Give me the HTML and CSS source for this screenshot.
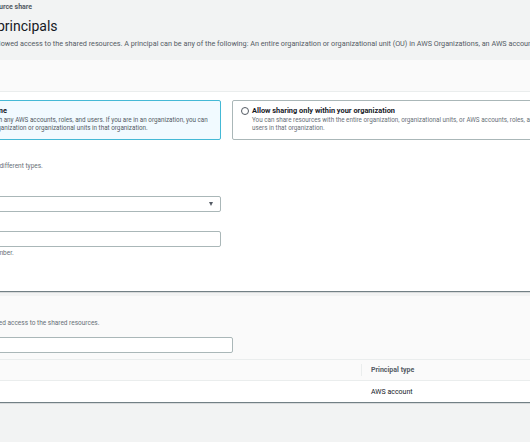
FILE: index.html
```html
<!DOCTYPE html>
<html lang="en">
<head>
<meta charset="utf-8">
<title>Grant access to principals</title>
<link rel="stylesheet" href="styles.css">
</head>
<body>
<div class="page">
  <header class="page-head">
    <div class="crumb">Resource shares<span class="sep">&rsaquo;</span>Create resource share</div>
    <h1 class="title">Grant access to principals</h1>
    <p class="lead">Specify the principals that are allowed access to the shared resources. A principal can be any of the following: An entire organization or organizational unit (OU) in AWS Organizations, an AWS account, an IAM role, or an IAM user.</p>
  </header>

  <section class="panel">
    <div class="panel-head"><h2 class="panel-title">Principals</h2></div>
    <div class="panel-body">
      <div class="tiles">
        <label class="tile tile-on">
          <span class="radio radio-on"></span>
          <span class="tile-text">
            <span class="tile-title">Allow sharing with anyone</span>
            <span class="tile-desc">You can share resources with any AWS accounts, roles, and users. If you are in an organization, you can also share with the entire organization or organizational units in that organization.</span>
          </span>
        </label>
        <label class="tile">
          <span class="radio"></span>
          <span class="tile-text">
            <span class="tile-title">Allow sharing only within your organization</span>
            <span class="tile-desc tile-desc-light">You can share resources with the entire organization, organizational units, or AWS accounts, roles, and users in that organization.</span>
          </span>
        </label>
      </div>

      <div class="field field-first">
        <div class="label">Principals</div>
        <div class="hint">You can add multiple principals of different types.</div>
      </div>

      <div class="field field-select">
        <div class="select">
          <span class="select-value">AWS account</span>
          <span class="caret"></span>
        </div>
      </div>

      <div class="field field-input">
        <div class="input"><span class="placeholder">Enter an AWS account ID</span></div>
        <div class="hint">Account IDs must be a 12-digit number.</div>
      </div>
    </div>
  </section>

  <section class="panel panel-second">
    <div class="panel-head panel-head-tall">
      <h2 class="panel-title">Selected principals (1)</h2>
      <div class="hint hint-head">These are principals that are allowed access to the shared resources.</div>
      <div class="input search"><span class="placeholder">Find principals</span></div>
    </div>
    <div class="table">
      <div class="row row-head">
        <div class="cell">Principal ID</div>
        <div class="cell cell-type"><span class="divider"></span>Principal type</div>
      </div>
      <div class="row">
        <div class="cell">111122223333</div>
        <div class="cell cell-type">AWS account</div>
      </div>
    </div>
  </section>
</div>
</body>
</html>
```

FILE: styles.css
```css
html, body {
  margin: 0;
  padding: 0;
  background: #f2f3f3;
  overflow: hidden;
}

body {
  width: 530px;
  height: 442px;
  font-family: Roboto, "Liberation Sans", Arial, sans-serif;
  color: #16191f;
}

.page {
  margin-left: -110px;
  width: 677px;
}

.page-head {
  padding: 2px 0 0 6px;
  height: 60px;
  box-sizing: border-box;
}

.crumb {
  font-size: 7px;
  line-height: 10px;
  font-weight: 700;
  color: #545b64;
  white-space: nowrap;
}

.sep {
  margin: 0 6px;
}

.title {
  margin: 4px 0 0;
  font-size: 14px;
  line-height: 20px;
  font-weight: 400;
  color: #16191f;
  white-space: nowrap;
}

.lead {
  margin: 3px 0 0;
  font-size: 7.25px;
  line-height: 10px;
  color: #545b64;
  white-space: nowrap;
}

.panel {
  background: #ffffff;
  box-shadow: 0 1px 1px 0 rgba(0, 28, 36, 0.35), 1px 1px 1px 0 rgba(0, 28, 36, 0.15), -1px 1px 1px 0 rgba(0, 28, 36, 0.15);
}

.panel-head {
  background: #fafafa;
  height: 32px;
  border-bottom: 1px solid #eaeded;
  padding: 0 10px;
  box-sizing: border-box;
  display: flex;
  flex-direction: column;
  justify-content: center;
}

.panel-title {
  margin: 0;
  font-size: 9px;
  line-height: 12px;
  font-weight: 700;
  color: #16191f;
  white-space: nowrap;
}

.panel-body {
  padding: 8px 10px 0;
  height: 199px;
  box-sizing: border-box;
}

.tiles {
  display: grid;
  grid-template-columns: 321px 321px;
  column-gap: 11px;
}

.tile {
  display: flex;
  align-items: flex-start;
  gap: 3px;
  height: 40px;
  box-sizing: border-box;
  padding: 5px 3px 6px 8px;
  border: 1px solid #aab7b8;
  border-radius: 2px;
  background: #ffffff;
}

.tile-on {
  background: #f1faff;
  border-color: #44b9d6;
}

.radio {
  flex: none;
  width: 8px;
  height: 8px;
  margin-top: 1px;
  box-sizing: border-box;
  border: 1px solid #545b64;
  border-radius: 50%;
  background: #ffffff;
}

.radio-on {
  border: 2.5px solid #0073bb;
}

.tile-text {
  display: flex;
  flex-direction: column;
}

.tile-title {
  font-size: 7.4px;
  line-height: 10px;
  font-weight: 700;
  color: #16191f;
  white-space: nowrap;
}

.tile-desc {
  font-size: 6.3px;
  line-height: 8px;
  color: #545b64;
}

.tile-desc-light {
  color: #687078;
}

.field-first {
  margin-top: 12px;
}

.label {
  font-size: 7px;
  line-height: 10px;
  font-weight: 700;
  color: #16191f;
}

.hint {
  font-size: 6.5px;
  line-height: 9px;
  color: #687078;
  white-space: nowrap;
}

.field-select {
  margin-top: 25px;
  width: 321px;
}

.select, .input {
  height: 16px;
  box-sizing: border-box;
  border: 1px solid #aab7b8;
  border-radius: 2px;
  background: #ffffff;
  display: flex;
  align-items: center;
  padding: 0 7px 0 6px;
  font-size: 7px;
}

.select-value {
  flex: 1;
  color: #16191f;
}

.caret {
  width: 0;
  height: 0;
  border-left: 2.5px solid transparent;
  border-right: 2.5px solid transparent;
  border-top: 4px solid #545b64;
}

.field-input {
  margin-top: 19px;
  width: 321px;
}

.field-input .hint {
  margin-top: 2px;
}

.placeholder {
  color: #879596;
  font-style: italic;
}

.panel-second {
  margin-top: 5px;
}

.panel-head-tall {
  height: 64px;
  justify-content: flex-start;
  padding-top: 9px;
}

.hint-head {
  margin-top: 1px;
  line-height: 10px;
}

.search {
  margin-top: 9px;
  width: 333px;
}

.table {
  display: flex;
  flex-direction: column;
}

.row {
  display: grid;
  grid-template-columns: 471px 1fr;
  height: 20px;
  border-bottom: 1px solid #eaeded;
  font-size: 7px;
  color: #16191f;
}

.row:last-child {
  border-bottom: none;
  height: 21px;
}

.row-head {
  background: #fafafa;
  font-weight: 700;
  color: #545b64;
}

.cell {
  display: flex;
  align-items: center;
  padding-left: 10px;
  white-space: nowrap;
}

.cell-type {
  position: relative;
}

.divider {
  position: absolute;
  left: 0;
  top: 4px;
  bottom: 4px;
  width: 1px;
  background: #eaeded;
}
```
